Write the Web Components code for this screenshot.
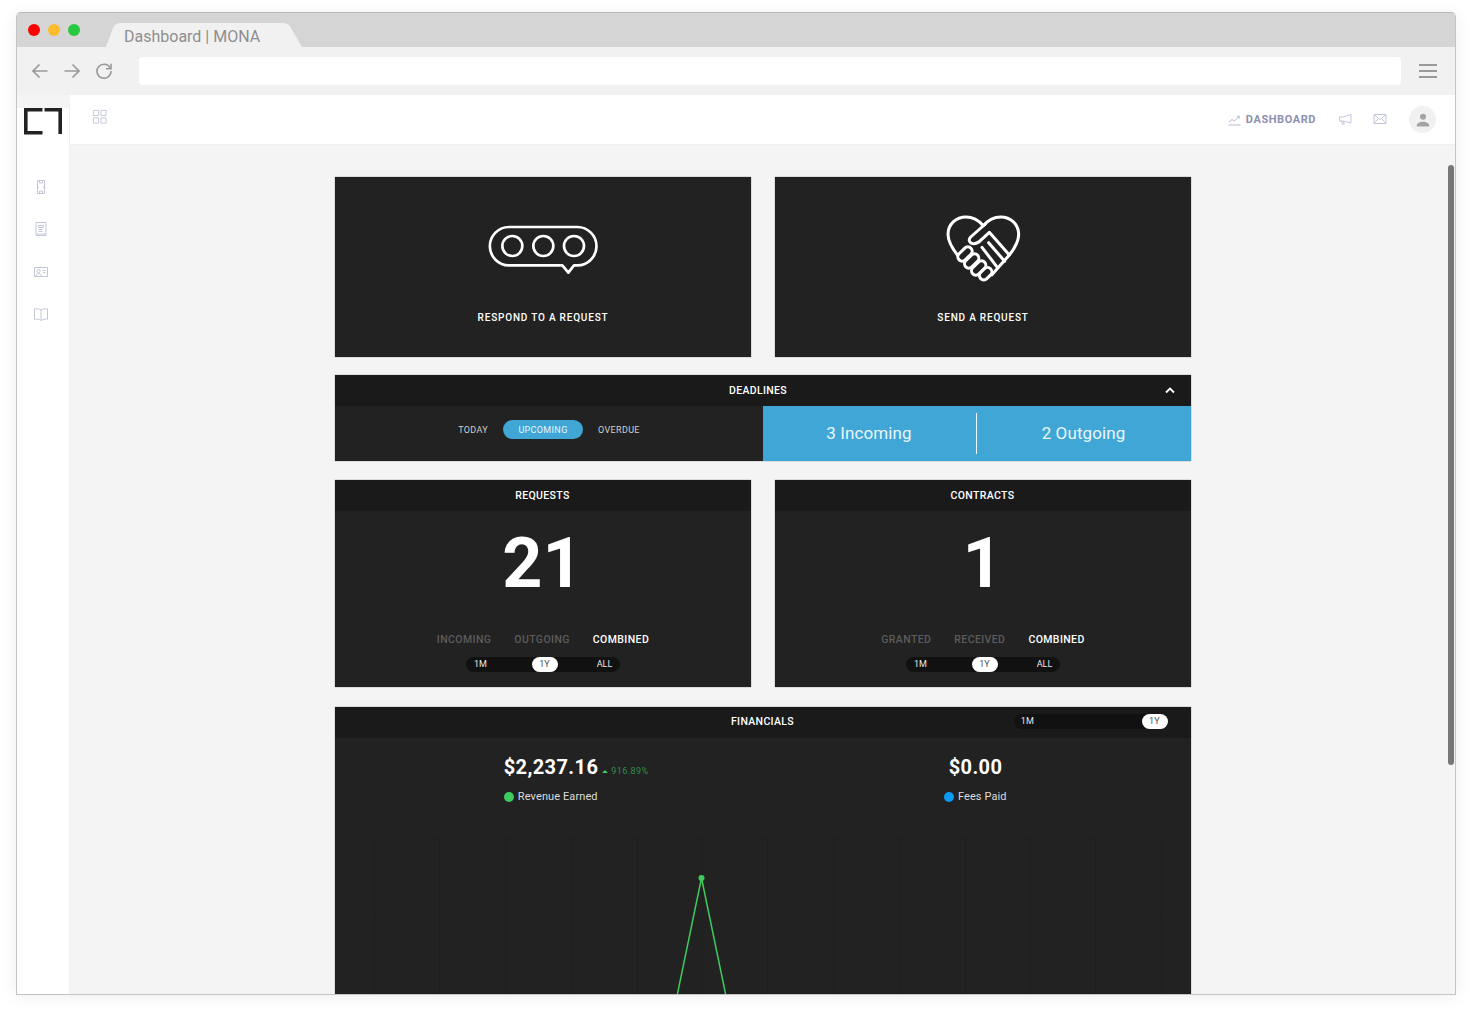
<!DOCTYPE html>
<html lang="en">
<head>
<meta charset="utf-8">
<title>Dashboard | MONA</title>
<style>
    html, body { margin: 0; height: 1014px; overflow: hidden; background: #fff; }
    body { font-family: Roboto, "Liberation Sans", sans-serif; }
</style>
</head>
<body>
<browser-frame label="Dashboard | MONA">
    <app-shell>
        <app-sidebar slot="sidebar"></app-sidebar>
        <app-header slot="header"></app-header>
        <dash-grid>
            <action-card label="Respond to a request" icon="bubble"></action-card>
            <action-card label="Send a request" icon="heart"></action-card>
            <deadlines-panel></deadlines-panel>
            <stat-card heading="Requests" value="21" tabs="Incoming,Outgoing,Combined"></stat-card>
            <stat-card heading="Contracts" value="1" tabs="Granted,Received,Combined"></stat-card>
            <financials-panel></financials-panel>
        </dash-grid>
    </app-shell>
</browser-frame>

<script>
class BrowserFrame extends HTMLElement {
    constructor() {
        super();
        this.shadow = this.attachShadow({ mode: 'open' });
    }
    connectedCallback() {
        this.shadow.innerHTML = /*html*/`
            <style>
                :host {
                    display: flex;
                    flex-direction: column;
                    height: 983px;
                    margin: 12px 16px 0;
                    box-sizing: border-box;
                    border-radius: 5px 5px 0 0;
                    border: 1px solid #c4c4c4;
                    border-top-color: #b8b8b8;
                    box-shadow: 0 2px 16px rgba(0,0,0,.07);
                    overflow: hidden;
                    background: #f4f4f4;
                }
                .titlebar {
                    height: 34px;
                    flex: none;
                    background: #d5d5d5;
                    display: flex;
                    align-items: flex-end;
                }
                .lights {
                    display: flex;
                    gap: 8px;
                    padding: 0 0 11px 11px;
                    align-items: center;
                }
                .lights i { width: 12px; height: 12px; border-radius: 50%; display: block; }
                .tab {
                    margin-left: 26px;
                    width: 196px;
                    height: 24px;
                    box-sizing: border-box;
                    padding: 4px 0 0 18px;
                    background: #f1f1f1;
                    color: #8e8e8e;
                    font-size: 16px;
                    line-height: 19px;
                    clip-path: path('M0 24 L7 5 Q9 0 15 0 L176 0 Q183 0 185 5 L196 24 Z');
                }
                .toolbar {
                    height: 47px;
                    flex: none;
                    background: #f1f1f1;
                    display: flex;
                    align-items: center;
                    padding: 0 18px 0 15px;
                    box-sizing: border-box;
                }
                .nav { display: flex; gap: 16px; }
                .nav svg { display: block; width: 16px; height: 16px; fill: none; stroke: #999; stroke-width: 1.6; }
                .url { flex: 1; height: 28px; margin: 1px 18px 0 27px; background: #fff; border-radius: 4px; }
                .menu { display: flex; flex-direction: column; gap: 4px; width: 18px; }
                .menu i { display: block; height: 2px; background: #999; }
                .page { flex: 1; min-height: 0; border-top: 1px solid #f1f1f1; }
            </style>
            <div class="titlebar">
                <div class="lights">
                    <i style="background:#fe0000"></i><i style="background:#fdbc2e"></i><i style="background:#28c840"></i>
                </div>
                <div class="tab">${this.getAttribute('label')}</div>
            </div>
            <div class="toolbar">
                <div class="nav">
                    <svg viewBox="0 0 16 16"><path d="M15.5 8H1M7.5 1.5 1 8l6.5 6.5"/></svg>
                    <svg viewBox="0 0 16 16"><path d="M.5 8H15M8.5 1.5 15 8l-6.5 6.5"/></svg>
                    <svg viewBox="0 0 16 16"><path d="M14 4.6A7 7 0 1 0 15 8"/><path d="M15 .8v5h-5" /></svg>
                </div>
                <div class="url"></div>
                <div class="menu"><i></i><i></i><i></i></div>
            </div>
            <div class="page"><slot></slot></div>
        `;
    }
}
customElements.define('browser-frame', BrowserFrame);

class AppShell extends HTMLElement {
    constructor() {
        super();
        this.shadow = this.attachShadow({ mode: 'open' });
    }
    connectedCallback() {
        this.shadow.innerHTML = /*html*/`
            <style>
                :host {
                    display: grid;
                    grid-template-columns: 53px 1fr;
                    grid-template-rows: 50px 1fr;
                    height: 100%;
                    overflow: hidden;
                }
                .side { grid-row: 1 / 3; }
                .main {
                    position: relative;
                    overflow: hidden;
                    display: flex;
                    justify-content: center;
                    padding-top: 32px;
                    background: #f4f4f4;
                }
                .thumb {
                    position: absolute;
                    top: 20px;
                    right: 1px;
                    width: 6px;
                    height: 600px;
                    border-radius: 3px;
                    background: #777;
                }
            </style>
            <div class="side"><slot name="sidebar"></slot></div>
            <div><slot name="header"></slot></div>
            <div class="main"><slot></slot><div class="thumb"></div></div>
        `;
    }
}
customElements.define('app-shell', AppShell);

class AppSidebar extends HTMLElement {
    constructor() {
        super();
        this.shadow = this.attachShadow({ mode: 'open' });
    }
    connectedCallback() {
        this.shadow.innerHTML = /*html*/`
            <style>
                :host {
                    display: block;
                    height: 100%;
                    box-sizing: border-box;
                    background: #fff;
                    border-right: 1px solid #eef0f6;
                }
                .logo { display: block; margin: 13px 0 0 7px; width: 38px; height: 27px; }
                nav { display: flex; flex-direction: column; align-items: center; margin: 44px 4px 0 0; gap: 26px; }
                nav svg { display: block; width: 16px; height: 16px; fill: none; stroke: #c3c6da; stroke-width: 1; }
                nav svg:nth-child(3) { margin-top: 1px; }
            </style>
            <svg class="logo" viewBox="0 0 38 27">
                <path d="M18.500 1.800H1.800v23H18.500M20.500 1.800h15.700V26" fill="none" stroke="#222" stroke-width="3.600"/>
            </svg>
            <nav>
                <svg viewBox="0 0 16 16"><path d="M4.5 1.5h7v13h-7zM6.5 1.5v2.5h3V1.5M4.5 8h1.4M10.1 8h1.4M6.5 14.5V12h3v2.5"/></svg>
                <svg viewBox="0 0 16 16"><path d="M3 1.5h10v13H3zM5.5 4.5h5v2h-5zM5.5 8.5h4M5.5 10.5h4M3 13h10"/></svg>
                <svg viewBox="0 0 16 16"><path d="M1.5 3.5h13v9h-13z"/><circle cx="5.5" cy="7" r="1.6"/><path d="M3 12.5c0-2 1-3 2.5-3s2.5 1 2.5 3M9.500 6.500h3.500M10 8.500h2.500"/></svg>
                <svg viewBox="0 0 16 16"><path d="M8 4C6.500 2.800 4 2.600 1.500 2.800v10.400c2.500-.2 5 0 6.500 1.200 1.500-1.200 4-1.400 6.500-1.200V2.800C12 2.600 9.500 2.800 8 4zM8 4v10.400"/></svg>
            </nav>
        `;
    }
}
customElements.define('app-sidebar', AppSidebar);

class AppHeader extends HTMLElement {
    constructor() {
        super();
        this.shadow = this.attachShadow({ mode: 'open' });
    }
    connectedCallback() {
        this.shadow.innerHTML = /*html*/`
            <style>
                :host {
                    display: flex;
                    align-items: center;
                    height: 50px;
                    box-sizing: border-box;
                    background: #fff;
                    border-bottom: 1px solid #eef0f6;
                    padding: 0 19px 0 22px;
                    color: #8d90b0;
                }
                svg { display: block; fill: none; stroke: #c3c6da; stroke-width: 1; }
                .grid { margin-top: -6px; width: 15px; height: 15px; }
                .dash { display: flex; align-items: center; margin-left: auto; font: 700 11px/14px Roboto, sans-serif; letter-spacing: .57px; }
                .dash svg { width: 13px; height: 13px; margin: 0 5px 0 0; stroke: #b4b7cf; }
                .mega { width: 14px; height: 14px; margin: -2px 0 0 22px; }
                .mail { width: 14px; height: 14px; margin: -2px 0 0 21px; }
                .avatar {
                    width: 27px;
                    height: 27px;
                    margin-left: 22px;
                    border-radius: 50%;
                    background: #f1f1f1;
                    display: flex;
                    align-items: center;
                    justify-content: center;
                }
                .avatar svg { width: 14px; height: 14px; fill: #a3a3a3; stroke: none; }
            </style>
            <svg class="grid" viewBox="0 0 16 16"><path d="M1.500 1.500h5.500v5.500H1.500zM9.500 1.500h5.500v5.500H9.500zM1.500 9.500h5.500v5.500H1.500zM9.500 9.500h5.500v5.500H9.500z"/></svg>
            <div class="dash">
                <svg viewBox="0 0 13 13"><path d="M.500 12h12M1 9l3-2.500 2.500 1.500L11 3.500M9 3.300h2.300v2.300"/></svg>
                DASHBOARD
            </div>
            <svg class="mega" viewBox="0 0 14 14"><path d="M13 2.500v8.500L5 9H1.500V5H5zM3.500 9l1 3.200h1.700L5.500 9.300"/></svg>
            <svg class="mail" viewBox="0 0 14 14"><path d="M1 2.500h12v9H1zM1 2.500l6 5 6-5M1 11.500l4.400-5M13 11.500 8.600 6.500"/></svg>
            <div class="avatar">
                <svg viewBox="0 0 14 14"><circle cx="7" cy="3.800" r="3"/><path d="M.700 13.500c0-3.200 2.800-4.700 6.300-4.700s6.300 1.500 6.300 4.700z"/></svg>
            </div>
        `;
    }
}
customElements.define('app-header', AppHeader);

class DashGrid extends HTMLElement {
    constructor() {
        super();
        this.shadow = this.attachShadow({ mode: 'open' });
    }
    connectedCallback() {
        this.shadow.innerHTML = /*html*/`
            <style>
                :host {
                    display: grid;
                    grid-template-columns: 416px 416px;
                    column-gap: 24px;
                    row-gap: 20px;
                    align-content: start;
                }
                ::slotted(deadlines-panel) { grid-column: 1 / 3; margin-top: -2px; }
                ::slotted(stat-card) { margin-top: -1px; }
                ::slotted(financials-panel) { grid-column: 1 / 3; }
            </style>
            <slot></slot>
        `;
    }
}
customElements.define('dash-grid', DashGrid);

class ActionCard extends HTMLElement {
    constructor() {
        super();
        this.shadow = this.attachShadow({ mode: 'open' });
    }
    get icon() {
        if (this.getAttribute('icon') === 'bubble') {
            return /*html*/`
                <svg width="150" height="75" viewBox="-6 0 450 225" fill="none" stroke="#fff" stroke-width="8">
                    <path d="M117 66H322a57.500 57.500 0 0 1 0 115H312l-17 22-18-22H117a57.500 57.500 0 0 1 0-115z" stroke-linejoin="round"/>
                    <circle cx="127" cy="123" r="30"/><circle cx="220" cy="123" r="30"/><circle cx="312" cy="123" r="30"/>
                </svg>`;
        }
        return /*html*/`
            <svg width="125" height="75" viewBox="0 0 375 225" fill="none" stroke="#fff" stroke-width="9" stroke-linecap="round" stroke-linejoin="round" style="overflow:visible">
                <path d="M118 157C95 130 84 110 84 88 84 58 108 36 138 36c20 0 38 10 52 26 14-16 32-26 52-26 30 0 54 22 54 52 0 24-12 42-28 62l-53 60"/>
                <path d="M196 57 152 96c-8 8-4 19 8 20 10 1 16-4 22-10l26-24 60 68M206 113l48 56M186 127l46 60"/>
                <g fill="#222">
                    <rect x="-25" y="-13" width="50" height="26" rx="13" transform="translate(135 147) rotate(-45)"/>
                    <rect x="-25" y="-13" width="50" height="26" rx="13" transform="translate(155 168) rotate(-45)"/>
                    <rect x="-25" y="-13" width="50" height="26" rx="13" transform="translate(176 189) rotate(-45)"/>
                    <rect x="-21" y="-13" width="42" height="26" rx="13" transform="translate(197 206) rotate(-45)"/>
                </g>
            </svg>`;
    }
    connectedCallback() {
        this.shadow.innerHTML = /*html*/`
            <style>
                :host {
                    display: flex;
                    flex-direction: column;
                    align-items: center;
                    height: 180px;
                    box-sizing: border-box;
                    padding-top: 28px;
                    background: #222;
                    box-shadow: 0 0 1px rgba(0,0,0,.6);
                }
                svg { display: block; }
                .label {
                    margin-top: 31px;
                    padding-left: 1px;
                    color: #fff;
                    font: 500 10px/14px Roboto, sans-serif;
                    letter-spacing: .8px;
                    text-transform: uppercase;
                }
            </style>
            ${this.icon}
            <div class="label">${this.getAttribute('label')}</div>
        `;
    }
}
customElements.define('action-card', ActionCard);

class RangeToggle extends HTMLElement {
    constructor() {
        super();
        this.shadow = this.attachShadow({ mode: 'open' });
    }
    connectedCallback() {
        const options = this.getAttribute('options').split(',');
        const active = this.getAttribute('active');
        this.shadow.innerHTML = /*html*/`
            <style>
                :host {
                    display: flex;
                    justify-content: space-between;
                    width: 154px;
                    height: 15px;
                    border-radius: 8px;
                    background: #111;
                    font: 400 9px/15px Roboto, sans-serif;
                    color: #e6e6e6;
                }
                span { width: 30px; text-align: center; border-radius: 8px; }
                span:nth-of-type(2):not(:last-child) { margin-left: 4px; }
                span:nth-of-type(3) { width: 30px; }
                :host([options="1M,1Y"]) span:first-of-type { width: 28px; }
                .on { width: 26px; background: #fff; color: #555; }
            </style>
            ${options.map(o => `<span class="${o === active ? 'on' : ''}">${o}</span>`).join('')}
        `;
    }
}
customElements.define('range-toggle', RangeToggle);

class DeadlinesPanel extends HTMLElement {
    constructor() {
        super();
        this.shadow = this.attachShadow({ mode: 'open' });
    }
    connectedCallback() {
        this.shadow.innerHTML = /*html*/`
            <style>
                :host {
                    display: block;
                    background: #222;
                    box-shadow: 0 0 1px rgba(0,0,0,.6);
                }
                header {
                    display: flex;
                    align-items: center;
                    height: 31px;
                    padding: 0 16px;
                    background: #1a1a1a;
                    color: #fff;
                    font: 500 10.500px/14px Roboto, sans-serif;
                    letter-spacing: .35px;
                }
                header div { flex: 1; text-align: center; padding-left: 1px; }
                header svg { display: block; width: 10px; height: 7px; margin-top: -1px; fill: none; stroke: #fff; stroke-width: 1.800; }
                .body { display: grid; grid-template-columns: 428px 1fr; height: 55px; }
                .filters {
                    display: flex;
                    justify-content: center;
                    align-items: flex-start;
                    gap: 15px;
                    padding: 14px 0 0 1px;
                    font: 400 9px/21px Roboto, sans-serif;
                    letter-spacing: .35px;
                    color: #d0d0d0;
                }
                .filters span { height: 19px; }
                .pill { width: 80px; text-align: center; border-radius: 10px; background: #40a6d6; color: #e8f5fb; }
                .counts {
                    display: grid;
                    grid-template-columns: 213px 1fr;
                    align-items: center;
                    background: #40a6d6;
                    color: #e9f6fc;
                    font: 400 17px/41px Roboto, sans-serif;
                    letter-spacing: .1px;
                    text-align: center;
                }
                .counts div { height: 41px; }
                .counts div + div { border-left: 1px solid #e9f6fc; }
            </style>
            <header>
                <div>DEADLINES</div>
                <svg viewBox="0 0 10 7"><path d="M1 5.500 5 1.500l4 4"/></svg>
            </header>
            <div class="body">
                <div class="filters">
                    <span>TODAY</span><span class="pill">UPCOMING</span><span>OVERDUE</span>
                </div>
                <div class="counts">
                    <div>3 Incoming</div><div>2 Outgoing</div>
                </div>
            </div>
        `;
    }
}
customElements.define('deadlines-panel', DeadlinesPanel);

class StatCard extends HTMLElement {
    constructor() {
        super();
        this.shadow = this.attachShadow({ mode: 'open' });
    }
    connectedCallback() {
        const tabs = this.getAttribute('tabs').split(',');
        this.shadow.innerHTML = /*html*/`
            <style>
                :host {
                    display: flex;
                    flex-direction: column;
                    align-items: center;
                    height: 207px;
                    background: #222;
                    box-shadow: 0 0 1px rgba(0,0,0,.6);
                }
                header {
                    align-self: stretch;
                    height: 31px;
                    background: #1a1a1a;
                    color: #fff;
                    font: 500 10.500px/31px Roboto, sans-serif;
                    letter-spacing: .35px;
                    text-align: center;
                    text-transform: uppercase;
                }
                .value {
                    height: 82px;
                    margin-top: 11px;
                    color: #fff;
                    font: 700 70px/82px Roboto, sans-serif;
                }
                .tabs {
                    display: flex;
                    gap: 23px;
                    margin-top: 29px;
                    padding-left: 1px;
                    font: 500 10.500px/14px Roboto, sans-serif;
                    letter-spacing: .4px;
                    text-transform: uppercase;
                    color: #5c5c5c;
                }
                .tabs .on { color: #fff; }
                range-toggle { margin-top: 10px; }
            </style>
            <header>${this.getAttribute('heading')}</header>
            <div class="value">${this.getAttribute('value')}</div>
            <div class="tabs">
                ${tabs.map((t, i) => `<span class="${i === tabs.length - 1 ? 'on' : ''}">${t}</span>`).join('')}
            </div>
            <range-toggle options="1M,1Y,ALL" active="1Y"></range-toggle>
        `;
    }
}
customElements.define('stat-card', StatCard);

class FinStat extends HTMLElement {
    constructor() {
        super();
        this.shadow = this.attachShadow({ mode: 'open' });
    }
    connectedCallback() {
        const change = this.getAttribute('change');
        this.shadow.innerHTML = /*html*/`
            <style>
                :host {
                    display: flex;
                    flex-direction: column;
                    align-items: center;
                    color: #fff;
                }
                .amount {
                    font: 700 20px/30px Roboto, sans-serif;
                    letter-spacing: .4px;
                    white-space: nowrap;
                }
                .change {
                    display: inline-block;
                    width: 50px;
                    margin: 0 -54px 0 4px;
                    font: 400 9px/12px Roboto, sans-serif;
                    letter-spacing: .4px;
                    color: #2f8f49;
                }
                .change::before {
                    content: '';
                    display: inline-block;
                    margin: 0 3px 1px 0;
                    border: 3px solid transparent;
                    border-top: 0;
                    border-bottom: 3px solid #3ecb5e;
                }
                .legend {
                    display: flex;
                    align-items: center;
                    gap: 3.500px;
                    margin-top: 7px;
                    font: 400 11px/16px Roboto, sans-serif;
                    letter-spacing: .1px;
                    color: #dcdcdc;
                }
                .legend i { width: 10px; height: 10px; border-radius: 50%; background: ${this.getAttribute('color')}; }
            </style>
            <div class="amount">${this.getAttribute('amount')}${change ? `<span class="change">${change}</span>` : ''}</div>
            <div class="legend"><i></i>${this.getAttribute('label')}</div>
        `;
    }
}
customElements.define('fin-stat', FinStat);

class RevenueChart extends HTMLElement {
    constructor() {
        super();
        this.shadow = this.attachShadow({ mode: 'open' });
    }
    connectedCallback() {
        const xs = [39, 104, 170, 236, 302, 367, 432, 498, 564, 630, 695, 760, 826];
        this.shadow.innerHTML = /*html*/`
            <style>
                :host { display: block; margin-top: 33px; }
                svg { display: block; }
            </style>
            <svg width="856" height="240" viewBox="0 0 856 240">
                <g stroke="#202020" stroke-width="1">
                    <path d="M39 .5H826M39 77.500H826M39 154.500H826"/>
                </g>
                <g stroke="#1e1e1e" stroke-width="1">
                    ${xs.map(x => `<path d="M${x}.5 0V240"/>`).join('')}
                </g>
                <path d="M325 240 366.500 40 408 240" fill="none" stroke="#3ecb5e" stroke-width="1.500"/>
                <circle cx="366.500" cy="40" r="3" fill="#3ecb5e"/>
            </svg>
        `;
    }
}
customElements.define('revenue-chart', RevenueChart);

class FinancialsPanel extends HTMLElement {
    constructor() {
        super();
        this.shadow = this.attachShadow({ mode: 'open' });
    }
    connectedCallback() {
        this.shadow.innerHTML = /*html*/`
            <style>
                :host {
                    display: block;
                    height: 400px;
                    background: #222;
                    box-shadow: 0 0 1px rgba(0,0,0,.6);
                }
                header {
                    display: grid;
                    grid-template-columns: 1fr auto 1fr;
                    align-items: center;
                    height: 31px;
                    box-sizing: border-box;
                    padding-bottom: 2px;
                    background: #1a1a1a;
                    color: #fff;
                    font: 500 10.500px/14px Roboto, sans-serif;
                    letter-spacing: .35px;
                }
                range-toggle { justify-self: end; margin-right: 23px; }
                .stats { display: grid; grid-template-columns: 1fr 1fr; padding-top: 14px; }
                fin-stat:first-child { padding-left: 5px; }
                fin-stat:last-child { padding-right: 2px; }
            </style>
            <header>
                <span></span>
                <div>FINANCIALS</div>
                <range-toggle options="1M,1Y" active="1Y"></range-toggle>
            </header>
            <div class="stats">
                <fin-stat amount="$2,237.16" change="916.89%" color="#3ecb5e" label="Revenue Earned"></fin-stat>
                <fin-stat amount="$0.00" color="#0a9cf5" label="Fees Paid"></fin-stat>
            </div>
            <revenue-chart></revenue-chart>
        `;
    }
}
customElements.define('financials-panel', FinancialsPanel);
</script>
</body>
</html>
